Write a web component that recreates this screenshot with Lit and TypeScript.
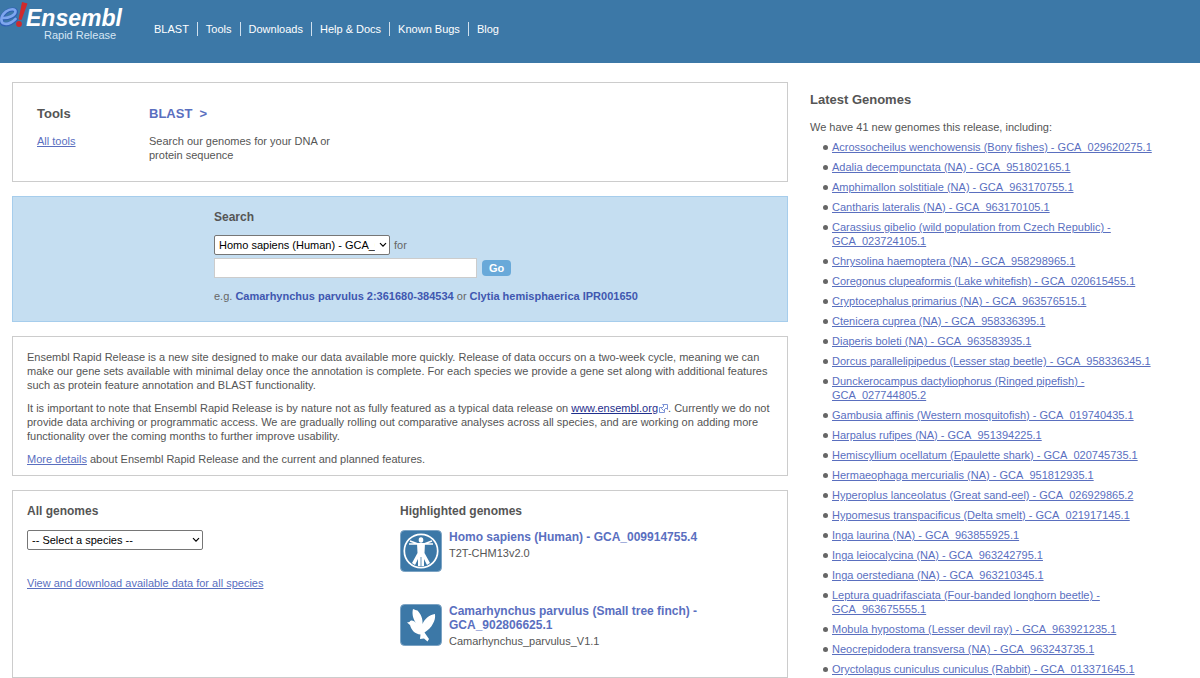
import { LitElement, html, css } from "lit";
import { customElement } from "lit/decorators.js";

const NAV = ["BLAST", "Tools", "Downloads", "Help & Docs", "Known Bugs", "Blog"];

const GENOMES = [
  "Acrossocheilus wenchowensis (Bony fishes) - GCA_029620275.1",
  "Adalia decempunctata (NA) - GCA_951802165.1",
  "Amphimallon solstitiale (NA) - GCA_963170755.1",
  "Cantharis lateralis (NA) - GCA_963170105.1",
  "Carassius gibelio (wild population from Czech Republic) - GCA_023724105.1",
  "Chrysolina haemoptera (NA) - GCA_958298965.1",
  "Coregonus clupeaformis (Lake whitefish) - GCA_020615455.1",
  "Cryptocephalus primarius (NA) - GCA_963576515.1",
  "Ctenicera cuprea (NA) - GCA_958336395.1",
  "Diaperis boleti (NA) - GCA_963583935.1",
  "Dorcus parallelipipedus (Lesser stag beetle) - GCA_958336345.1",
  "Dunckerocampus dactyliophorus (Ringed pipefish) - GCA_027744805.2",
  "Gambusia affinis (Western mosquitofish) - GCA_019740435.1",
  "Harpalus rufipes (NA) - GCA_951394225.1",
  "Hemiscyllium ocellatum (Epaulette shark) - GCA_020745735.1",
  "Hermaeophaga mercurialis (NA) - GCA_951812935.1",
  "Hyperoplus lanceolatus (Great sand-eel) - GCA_026929865.2",
  "Hypomesus transpacificus (Delta smelt) - GCA_021917145.1",
  "Inga laurina (NA) - GCA_963855925.1",
  "Inga leiocalycina (NA) - GCA_963242795.1",
  "Inga oerstediana (NA) - GCA_963210345.1",
  "Leptura quadrifasciata (Four-banded longhorn beetle) - GCA_963675555.1",
  "Mobula hypostoma (Lesser devil ray) - GCA_963921235.1",
  "Neocrepidodera transversa (NA) - GCA_963243735.1",
  "Oryctolagus cuniculus cuniculus (Rabbit) - GCA_013371645.1",
];

@customElement("app-root")
export class AppRoot extends LitElement {
  static styles = css`
    :host {
      display: block;
      height: 100vh;
      overflow: hidden;
      background: #fff;
      color: #555;
      font: 11px/14px "Liberation Sans", Arial, sans-serif;
    }
    * { box-sizing: border-box; }
    h2, h3, p, ul { margin: 0; padding: 0; }
    a { color: #5a6fbf; }
    h2, h3 { color: #555; font-weight: bold; }
    h2 { font-size: 13px; line-height: 16px; }
    h3 { font-size: 12px; line-height: 14px; }
    .masthead {
      display: flex;
      align-items: flex-start;
      gap: 22px;
      height: 63px;
      background: #3c78a7;
    }
    .logo { display: block; }
    .logo svg { display: block; width: 124px; height: 44px; }
    .nav { display: flex; list-style: none; padding-top: 22px; }
    .nav li { padding: 0 8px; line-height: 14px; }
    .nav li + li { border-left: 1px solid #cfe0ee; }
    .nav a { color: #fff; text-decoration: none; }
    .page {
      display: grid;
      grid-template-columns: minmax(0, 776fr) minmax(0, 368fr);
      gap: 22px;
      padding: 19px 22px 0 12px;
    }
    .main { display: flex; flex-direction: column; gap: 14px; }
    .box { border: 1px solid #ccc; }
    .tools { display: flex; padding: 23px 24px 19px; }
    .tools-side { width: 112px; }
    .tools-side, .tool { display: flex; flex-direction: column; align-items: flex-start; gap: 12px; }
    .tool { width: 190px; }
    .tool h2 a { text-decoration: none; }
    .search {
      display: flex;
      flex-direction: column;
      padding: 13px 20px 18px 201px;
      background: #c5def1;
      border-color: #a6cdec;
    }
    .row { display: flex; align-items: center; gap: 4px; color: #666; }
    .row-species { margin: 11px 0 3px; }
    select {
      appearance: none;
      width: 176px;
      height: 20px;
      padding: 0 14px 0 4px;
      border: 1px solid #767676;
      border-radius: 2px;
      background: #fff url("data:image/svg+xml,%3Csvg xmlns='http://www.w3.org/2000/svg' viewBox='0 0 8 6'%3E%3Cpath d='M1 1.2l3 3 3-3' fill='none' stroke='%23000' stroke-width='1.2'/%3E%3C/svg%3E") no-repeat right 2px center / 8px 6px;
      color: #000;
      font: inherit;
    }
    .query {
      width: 263px;
      height: 20px;
      border: 1px solid #ccc;
      background: #fff;
      font: inherit;
    }
    .go {
      height: 16px;
      padding: 0 7px;
      border: 0;
      border-radius: 4px;
      background: #69a9d9;
      color: #fff;
      font: bold 11px/16px "Liberation Sans", Arial, sans-serif;
    }
    .row-query { gap: 5px; }
    .examples { margin-top: 11px; color: #666; }
    .examples a { color: #3f57b0; font-weight: bold; text-decoration: none; }
    .about { display: flex; flex-direction: column; gap: 9px; padding: 13px 0 9px 14px; }
    .about .site { color: #1f2f8c; }
    .ext { width: 9px; height: 9px; vertical-align: -1px; margin-left: 1px; }
    .genomes { display: grid; grid-template-columns: 1fr 1fr; padding: 13px 14px 29px; }
    .all { display: flex; flex-direction: column; align-items: flex-start; }
    .all select { margin: 12px 0 26px; }
    .high { display: flex; flex-direction: column; gap: 32px; }
    .high-first { display: flex; flex-direction: column; gap: 12px; }
    .species { display: flex; gap: 7px; }
    .species svg { flex: none; width: 42px; height: 42px; }
    .species a { font-size: 12px; font-weight: bold; text-decoration: none; }
    .species-text { display: flex; flex-direction: column; gap: 2px; width: 270px; }
    .latest { padding-top: 10px; }
    .latest p { margin: 12px 0 6px; }
    .list { list-style: none; display: flex; flex-direction: column; gap: 6px; }
    .list li { display: flex; gap: 4px; padding-left: 13px; max-width: 356px; }
    .list li::before {
      content: "";
      flex: none;
      width: 5px;
      height: 5px;
      margin-top: 5px;
      border-radius: 3px;
      background: #666;
    }
  `;

  render() {
    return html`
      <header class="masthead">
        <a class="logo" href="#" aria-label="Ensembl Rapid Release">
          <svg viewBox="0 0 124 44">
            <path d="M2 18.500 C9 19 16 15.500 16 12 C16 8.500 10 8.500 6 12 C0 17 0 24 5 24.500 C9 25 13 22 16 19.500" fill="none" stroke="#2f5fb4" stroke-width="4" stroke-linecap="round" />
            <path d="M2 18 C9 18.500 15.500 15 15.500 11.500 C15.500 8.500 10 8.500 6 11.500 C0 16.500 0 23 5 23.800 C9 24.300 13 21.500 15.500 19" fill="none" stroke="#7ea6ee" stroke-width="2.600" stroke-linecap="round" />
            <path d="M22 2 L27.500 3.500 L21.500 20 L18.500 19.500 Z" fill="#cf2a2c" />
            <circle cx="19" cy="24" r="2.900" fill="#cf2a2c" />
            <text x="26" y="26" font-size="23" font-weight="bold" font-style="italic" fill="#fff">Ensembl</text>
            <text x="44" y="39" font-size="11" fill="#d6e6f4">Rapid Release</text>
          </svg>
        </a>
        <nav><ul class="nav">${NAV.map((n) => html`<li><a href="#">${n}</a></li>`)}</ul></nav>
      </header>
      <div class="page">
        <main class="main">
          <section class="box tools">
            <div class="tools-side"><h2>Tools</h2><a href="#">All tools</a></div>
            <div class="tool">
              <h2><a href="#">BLAST &nbsp;&gt;</a></h2>
              <p>Search our genomes for your DNA or protein sequence</p>
            </div>
          </section>
          <form class="box search">
            <h3>Search</h3>
            <div class="row row-species">
              <select aria-label="Species"><option>Homo sapiens (Human) - GCA_009914755.4</option></select>
              <label for="q">for</label>
            </div>
            <div class="row row-query">
              <input class="query" id="q" type="text" />
              <button class="go" type="button">Go</button>
            </div>
            <p class="examples">e.g. <a href="#">Camarhynchus parvulus 2:361680-384534</a> or <a href="#">Clytia hemisphaerica IPR001650</a></p>
          </form>
          <section class="box about">
            <p>Ensembl Rapid Release is a new site designed to make our data available more quickly. Release of data occurs on a two-week cycle, meaning we can make our gene sets available with minimal delay once the annotation is complete. For each species we provide a gene set along with additional features such as protein feature annotation and BLAST functionality.</p>
            <p>It is important to note that Ensembl Rapid Release is by nature not as fully featured as a typical data release on <a class="site" href="#">www.ensembl.org</a><svg class="ext" viewBox="0 0 9 9"><g fill="#fff" stroke="#7c93d6"><path d="M.5 3.500h5v5h-5z" /><path d="M3.500 .5h5v5l-1.500-1.500-2.500 2.500-2-2 2.500-2.500z" /></g></svg>. Currently we do not provide data archiving or programmatic access. We are gradually rolling out comparative analyses across all species, and are working on adding more functionality over the coming months to further improve usability.</p>
            <p><a href="#">More details</a> about Ensembl Rapid Release and the current and planned features.</p>
          </section>
          <section class="box genomes">
            <div class="all">
              <h3>All genomes</h3>
              <select aria-label="All genomes"><option>-- Select a species --</option></select>
              <a href="#">View and download available data for all species</a>
            </div>
            <div class="high">
              <div class="high-first">
                <h3>Highlighted genomes</h3>
                <div class="species">
                  <svg viewBox="0 0 42 42">
                    <rect x=".5" y=".5" width="41" height="41" rx="4" fill="#3c78a7" stroke="#7ba3c4" />
                    <circle cx="21" cy="21" r="16.700" fill="none" stroke="#fff" stroke-width="1.700" />
                    <ellipse cx="21" cy="10" rx="2.300" ry="2.800" fill="#fff" />
                    <path d="M10 11 L18 14 H24 L32 11 M9 14 H33" stroke="#fff" stroke-width="1.600" fill="none" />
                    <path d="M17 13 H25 L24.500 23 L30 33 L27 35 L24 29 V36 H21.400 V27 H20.600 V36 H18 V29 L15 35 L12 33 L17.500 23Z" fill="#fff" />
                  </svg>
                  <div class="species-text"><a href="#">Homo sapiens (Human) - GCA_009914755.4</a><span>T2T-CHM13v2.0</span></div>
                </div>
              </div>
              <div class="species">
                <svg viewBox="0 0 42 42">
                  <rect x=".5" y=".5" width="41" height="41" rx="4" fill="#3c78a7" stroke="#7ba3c4" />
                  <path d="M7 18.500 L9.500 18 C11 15.500 14 16.500 16 19 C12.500 14 12 9 13 5 C15 6 16 6 17.500 6.500 C21 10 23 15 22.500 20 C24.500 15 29 11 35 10 C35.500 14 34.500 17 33 19.500 C31.500 23.500 27.500 26.500 24.500 28.500 L29 35 L27.500 37.500 L24 34.500 L20 35 L20.500 30.500 C15 30 11.500 26.500 10 21Z" fill="#fff" />
                </svg>
                <div class="species-text"><a href="#">Camarhynchus parvulus (Small tree finch) - GCA_902806625.1</a><span>Camarhynchus_parvulus_V1.1</span></div>
              </div>
            </div>
          </section>
        </main>
        <aside class="latest">
          <h2>Latest Genomes</h2>
          <p>We have 41 new genomes this release, including:</p>
          <ul class="list">${GENOMES.map((g) => html`<li><a href="#">${g}</a></li>`)}</ul>
        </aside>
      </div>
    `;
  }
}
